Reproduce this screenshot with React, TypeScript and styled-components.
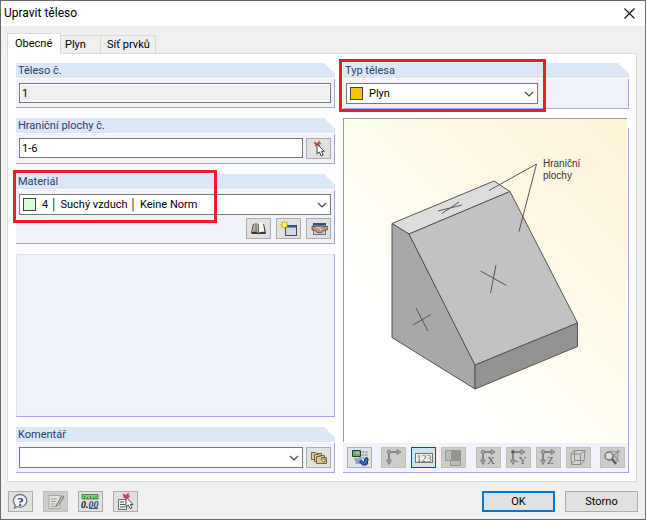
import React from "react";
import styled, { createGlobalStyle, css } from "styled-components";

const GlobalStyle = createGlobalStyle`
  * { box-sizing: border-box; }
  body {
    margin: 0;
    font-family: Roboto, "Liberation Sans", sans-serif;
    font-size: 11px;
    line-height: 15px;
    color: #000;
  }
  button, input, select { font: inherit; color: inherit; margin: 0; }
`;

const Dialog = styled.main`
  min-height: 100vh;
  display: flex;
  flex-direction: column;
  background: #f0f0f0;
  border: 1px solid #6b696b;
`;

const TitleBar = styled.header`
  height: 25px;
  display: flex;
  align-items: center;
  justify-content: space-between;
  padding: 0 10px 0 3px;
  background: #fff;
`;

const Title = styled.h1`
  margin: 0;
  font-size: 12px;
  font-weight: 400;
`;

const CloseButton = styled.button`
  display: flex;
  padding: 0;
  border: 0;
  background: none;
`;

const TabList = styled.div`
  display: flex;
  align-items: flex-end;
  height: 27px;
  padding-left: 6px;
`;

const Tab = styled.button<{ $active?: boolean }>`
  height: 18px;
  min-width: 40px;
  padding: 0 4px;
  text-align: left;
  border: 1px solid #d9d9d9;
  border-left-width: 0;
  border-bottom: 0;
  background: #f0f0f0;
  ${(p) =>
    p.$active &&
    css`
      height: 21px;
      min-width: 54px;
      margin-bottom: -1px;
      padding: 0 7px 2px 7px;
      border-left-width: 1px;
      background: #fff;
      position: relative;
    `}
`;

const WideTab = styled(Tab)`
  min-width: 55px;
  padding: 0 4px 0 6px;
`;

const Panel = styled.section`
  flex: 1;
  display: grid;
  grid-template-columns: 319fr 286fr;
  gap: 8px;
  margin: 0 8px 0 6px;
  padding: 9px 7px 8px 8px;
  background: #fff;
  border: 1px solid #dcdcdc;
`;

const Column = styled.div<{ $gap: number }>`
  display: flex;
  flex-direction: column;
  gap: ${(p) => p.$gap}px;
  min-width: 0;
`;

const Group = styled.section`
  border: solid #a5a5ef;
  border-width: 0 1px 1px 0;
  background: #f0f3f9;
  clip-path: polygon(0 0, calc(100% - 11px) 0, 100% 11px, 100% 100%, 0 100%);
`;

const GroupTitle = styled.h2`
  margin: 0 -1px 0 0;
  height: 16px;
  padding-left: 2px;
  font-size: 11px;
  line-height: 16px;
  font-weight: 400;
  color: #1f4272;
  background: #dce6f4;
  border-bottom: 1px solid #fff;
`;

const GroupBody = styled.div`
  display: flex;
  flex-direction: column;
  gap: 3px;
  padding: 4px 3px;
`;

const EmptyGroup = styled.section`
  flex: 1;
  background: #f0f3f9;
  border: 1px solid #a5a5ef;
  border-top-color: #dce6f4;
  border-left-color: #dce6f4;
`;

const Row = styled.div<{ $end?: boolean; $gap?: number }>`
  display: flex;
  justify-content: ${(p) => (p.$end ? "flex-end" : "flex-start")};
  gap: ${(p) => p.$gap ?? 3}px;
`;

const TextInput = styled.input`
  flex: 1;
  min-width: 0;
  height: 20px;
  padding: 0 2px;
  border: 1px solid #7a7a7a;
  border-radius: 0;
  outline: 0;
  background: #fff;
  &:read-only { background: #f0f0f0; box-shadow: inset 0 0 0 1px #fff; }
`;

const ComboFrame = styled.div<{ $partial?: boolean }>`
  flex: ${(p) => (p.$partial ? "0 1 192px" : "1")};
  min-width: 0;
  height: 21px;
  display: flex;
  align-items: center;
  padding: 0 3px;
  background: #fff;
  border: 1px solid #7a7a7a;
`;

const ComboSelect = styled.select`
  flex: 1;
  min-width: 0;
  height: 19px;
  padding: 0;
  appearance: none;
  border: 0;
  outline: 0;
  background: transparent;
`;

const Swatch = styled.span<{ $color: string }>`
  width: 13px;
  height: 13px;
  margin-right: 6px;
  border: 1px solid #444;
  background: ${(p) => p.$color};
`;

const IconButton = styled.button<{ $active?: boolean }>`
  flex: none;
  width: 25px;
  height: 21px;
  display: flex;
  align-items: center;
  justify-content: center;
  padding: 0;
  background: #e1e1e1;
  border: 1px solid #adadad;
  &:disabled { background: #ccc; border-color: #bfbfbf; }
  ${(p) => p.$active && css`background: #cce4f7; border-color: #00549a;`}
`;

const ViewGroup = styled.section`
  position: relative;
  flex: 1;
  display: flex;
  flex-direction: column;
  background: #fff;
  border-bottom: 1px solid #a5a5ef;
  &::after {
    content: "";
    position: absolute;
    top: 10px;
    right: 0;
    bottom: 0;
    width: 1px;
    background: #a5a5ef;
  }
`;

const Preview = styled.figure`
  flex: 1;
  margin: 0 2px 1px 0;
  display: flex;
  border: solid #9b9b9b;
  border-width: 1px 0 0 1px;
  background: linear-gradient(45deg, #fff 25%, #fffcef 52%, #fef7e2 72%, #fcf4d8 100%);
  svg { width: 100%; height: 100%; }
`;

const ViewTools = styled.div`
  display: flex;
  justify-content: space-between;
  padding: 4px;
  background: #f0f3f9;
`;

const ToolSet = styled.div`
  display: flex;
  gap: 5px;
`;

const Footer = styled.footer`
  display: flex;
  align-items: center;
  gap: 10px;
  height: 37px;
  padding: 2px 7px 0;
`;

const Spacer = styled.span`
  flex: 1;
`;

const PushButton = styled.button<{ $primary?: boolean }>`
  width: 73px;
  height: 21px;
  padding: 0;
  line-height: 17px;
  background: #e1e1e1;
  border: ${(p) => (p.$primary ? "2px solid #0078d7" : "1px solid #adadad")};
`;

const MarkedArea = styled.div`
  position: relative;
`;

const Mark = styled.span<{ $width: number; $left: number }>`
  position: absolute;
  z-index: 1;
  top: -4px;
  left: ${(p) => p.$left}px;
  width: ${(p) => p.$width}px;
  height: 53px;
  border: 3px solid #ee1c25;
  pointer-events: none;
`;

const Chevron = () => (
  <svg width="10" height="6" viewBox="0 0 10 6" fill="none" stroke="#444" strokeWidth="1.1">
    <path d="M1 1l4 4 4-4" />
  </svg>
);

const PickIcon = () => (
  <svg width="18" height="18" viewBox="0 0 18 18">
    <path d="M4 2l6 4M10 1L5 6M4 3.500h7" stroke="#d84a4a" strokeWidth="1.500" fill="none" />
    <path d="M7 4v10l2.400-2 1.800 4 2-1-1.800-3.700h3z" fill="#fff" stroke="#444" />
  </svg>
);

const BookIcon = () => (
  <svg width="17" height="15" viewBox="0 0 17 15">
    <path d="M1 12L3 3h11l2 9-1 1H2z" fill="#35373f" />
    <path d="M2 11L4 2c2-.7 3.500-.3 4.500 1v9c-2-1.300-4-1.500-6.500-1z" fill="#b9b2a3" />
    <path d="M8.500 12V3C9.500 1.500 11 1.200 13 2l1.500 9c-2-.5-4-.3-6 1z" fill="#f7f5ef" />
    <path d="M8.500 3v9M6 2.500v8.500" stroke="#6a655c" fill="none" />
  </svg>
);

const NewIcon = () => (
  <svg width="18" height="17" viewBox="0 0 18 17">
    <rect x="5.500" y="5.500" width="11" height="10" fill="#d3d8de" stroke="#4c4c4c" />
    <path d="M6 5h10v2.500H6z" fill="#2b50a8" />
    <path d="M4.500 1v8M.5 5h8M1.500 2l6 6M7.500 2l-6 6" stroke="#c9b400" strokeWidth="1.300" />
    <circle cx="4.500" cy="5" r="2.200" fill="#fff45c" />
  </svg>
);

const EditIcon = () => (
  <svg width="18" height="16" viewBox="0 0 18 16">
    <rect x="3.500" y="2.500" width="12" height="11" fill="#cfcfcf" stroke="#777" />
    <path d="M3 2h13v2.500H3z" fill="#2b4f9c" />
    <path d="M2 5l5 .5 3-1 4 1h4v3l-4 1-3 2.500-4-.5-2-2-3-.5z" fill="#b99a80" stroke="#57483e" strokeWidth=".8" />
    <path d="M6 6.500l3 .5 3 2" stroke="#f1d9c4" fill="none" />
  </svg>
);

const FoldersIcon = () => (
  <svg width="18" height="14" viewBox="0 0 18 14" fill="#d8ca91" stroke="#72683f">
    <path d="M1.500 8.500v-7h4l1 1h5v6z" />
    <path d="M4.500 10.500v-7h4l1 1h5v6z" />
    <path d="M6.500 12.500v-7h4l1 1h5v6z" />
    <path d="M11 8h4v3h-2z" fill="#fff" />
  </svg>
);

const DisplayIcon = () => (
  <svg width="18" height="18" viewBox="0 0 18 18">
    <path d="M8 2h9v8H8z" fill="#9da9ac" />
    <path d="M11 2v8M13.500 2v8M16 2v8M9 4.500h8M9 7.500h8" stroke="#e6eaec" strokeWidth=".7" />
    <path d="M1.500 1.500h8v6h-8z" fill="#58b83d" stroke="#263b46" />
    <path d="M2 2h7v2H2z" fill="#54a9dc" />
    <path d="M5 3h3v2H5z" fill="#f2b928" />
    <path d="M3 9h8v6H5z" fill="#8fa3c2" />
    <path d="M8.500 12.500l2-1 2 1.500 1-1v-2l2-1.500 1.500 1v2l-1 1.500 1 1-1.500 2h-4z" fill="#2f68b5" stroke="#183564" />
  </svg>
);

const AxisIcon = ({ axis }: { axis?: string }) => (
  <svg width="18" height="17" viewBox="0 0 18 17" fill="none" stroke="#858580">
    <path d="M4 3h11M4 3v12" strokeWidth="2" />
    <path d="M12 .5l4 2.500-4 2.500zM1.500 11L4 15.500 6.500 11z" fill="#a5a5a0" />
    <circle cx="4" cy="3" r="1.800" fill={axis === "-Y" ? "#555" : "#a5a5a0"} />
    {axis && (
      <text x={axis === "-Y" ? 6 : 8} y="15" fill="#666" stroke="none" fontFamily="Liberation Serif, serif" fontSize="11">{axis}</text>
    )}
  </svg>
);

const NumbersIcon = () => (
  <svg width="18" height="12" viewBox="0 0 18 12">
    <rect x=".5" y="1.500" width="17" height="9" fill="#f3f1ea" stroke="#77746d" />
    <text x="9" y="9.500" textAnchor="middle" fill="#6a6760" fontFamily="Liberation Serif, serif" fontSize="10">123</text>
  </svg>
);

const LayersIcon = () => (
  <svg width="17" height="17" viewBox="0 0 17 17">
    <path d="M.5 1.500h6v10h-6zM5.500 11.500h10v5h-10z" fill="#bcbcb8" stroke="#969690" />
    <path d="M6 1h10v10H6z" fill="#969690" />
  </svg>
);

const CubeIcon = () => (
  <svg width="18" height="17" viewBox="0 0 18 17" fill="#d2d2ce" stroke="#8c8c88">
    <path d="M2 4.500l3.500-3h10.500l-1 10.500-3 3.500H2.500z" />
    <path d="M2 5h9.500l4.500-3.500M11.500 5v10M5.500 2v9.500H15M5.500 11.500L2.500 15" fill="none" />
  </svg>
);

const SearchOffIcon = () => (
  <svg width="18" height="17" viewBox="0 0 18 17" fill="none" stroke="#777772">
    <path d="M7 3l9 9M16 1L6 12M8 2l9 1M15 1l-1 12" stroke="#96968f" strokeWidth="1.200" />
    <circle cx="6" cy="7" r="4" fill="#dcdcd8" strokeWidth="1.500" />
    <path d="M9 10l4 5" stroke="#5e5e5a" strokeWidth="2.500" />
  </svg>
);

const HelpIcon = () => (
  <svg width="17" height="17" viewBox="0 0 17 17">
    <path d="M8.500 1.500a6.500 6.300 0 1 1-3 12L2.500 15l.7-3A6.500 6.300 0 0 1 8.500 1.500z" fill="#f4f5f8" stroke="#73777e" strokeWidth="1.300" />
    <text x="8.500" y="12.500" textAnchor="middle" fill="#233f86" fontWeight="700" fontFamily="Liberation Serif, serif" fontSize="13">?</text>
  </svg>
);

const NoteIcon = () => (
  <svg width="18" height="18" viewBox="0 0 18 18">
    <path d="M2 2.500h11v13H2z" fill="#e2e2da" stroke="#a6a69e" />
    <path d="M4 6h6M4 8.500h5M4 11h4M4 13.500h5" stroke="#9f9f97" />
    <path d="M15.500 2.500l1.500 1.500-6 8.500-2 1 .5-2z" fill="#c4c4bc" stroke="#77776f" />
  </svg>
);

const UnitsIcon = () => (
  <svg width="19" height="17" viewBox="0 0 19 17">
    <path d="M1 1.500h16v4.500H1z" fill="#79cf74" stroke="#4b9048" />
    <path d="M3.500 3v3M6.500 4v2M9.500 3v3M12.500 4v2M15 3v3" stroke="#35733a" strokeWidth=".8" />
    <path d="M8 15.500h9" stroke="#2f4f9c" />
    <text x="0" y="14.500" fill="#111" fontFamily="Liberation Serif, serif" fontSize="10" fontStyle="italic" fontWeight="700">
      0.<tspan fill="#2a4284">00</tspan>
    </text>
  </svg>
);

const PickListIcon = () => (
  <svg width="18" height="18" viewBox="0 0 18 18">
    <path d="M1.500 6.500h8v10h-8z" fill="#f2f2f2" stroke="#666" />
    <path d="M3 9h4M3 11.500h5M3 14h5" stroke="#555" />
    <path d="M6 1l6 4M12 0L7 5M6 3h7" stroke="#dd4040" strokeWidth="1.500" />
    <path d="M9 4v10l2.300-2 1.700 3.700 2-1-1.700-3.200H16z" fill="#fff" stroke="#444" />
  </svg>
);

const SolidDrawing = () => (
  <svg viewBox="344 119 283 323" role="img" aria-label="Hraniční plochy" stroke="#555" strokeWidth="1" strokeLinejoin="round">
    <path d="M392 223.500L494 181l16 10.500L409 234z" fill="#dedddc" />
    <path d="M392 223.500L409 234l66 131v24l-83-51.500z" fill="#a8a8a8" />
    <path d="M409 234l101-42.500L577.500 323 475 365z" fill="#c2c2c2" />
    <path d="M475 365l102.500-42v23.500L475 389z" fill="#949392" />
    <path
      d="M489 190.500l47.500-26.500L519 231.500M438 211l24-6M442 213.500l17-11.500M480.500 271l26 14.500M496 265l-5.500 28M413 325l18-10.500M416 308l12 23"
      fill="none"
    />
    <g fill="#333" stroke="none" fontFamily="Liberation Sans, sans-serif" fontSize="10">
      <text x="543" y="167">Hraniční</text>
      <text x="543" y="179">plochy</text>
    </g>
  </svg>
);

const viewAxes = ["X", "-Y", "Z"];

const material = ["4", "Suchý vzduch", "Keine Norm"].join("\u00a0\u2502\u00a0");

export default function App() {
  return (
    <>
      <GlobalStyle />
      <Dialog>
        <TitleBar>
          <Title>Upravit těleso</Title>
          <CloseButton aria-label="Zavřít">
            <svg width="11" height="11" viewBox="0 0 11 11" stroke="#111" strokeWidth="1.100">
              <path d="M.5.5l10 10M10.500.5l-10 10" />
            </svg>
          </CloseButton>
        </TitleBar>
        <TabList role="tablist">
          <Tab $active role="tab" aria-selected="true">Obecné</Tab>
          <Tab role="tab" aria-selected="false">Plyn</Tab>
          <WideTab role="tab" aria-selected="false">Síť prvků</WideTab>
        </TabList>
        <Panel role="tabpanel">
          <Column $gap={10}>
            <Group>
              <GroupTitle><label htmlFor="solid">Těleso č.</label></GroupTitle>
              <GroupBody>
                <Row><TextInput id="solid" defaultValue="1" readOnly /></Row>
              </GroupBody>
            </Group>
            <Group>
              <GroupTitle><label htmlFor="surfaces">Hraniční plochy č.</label></GroupTitle>
              <GroupBody>
                <Row>
                  <TextInput id="surfaces" defaultValue="1-6" />
                  <IconButton aria-label="Vybrat plochy"><PickIcon /></IconButton>
                </Row>
              </GroupBody>
            </Group>
            <MarkedArea>
              <Group>
                <GroupTitle><label htmlFor="material">Materiál</label></GroupTitle>
                <GroupBody>
                  <Row>
                    <ComboFrame>
                      <Swatch $color="#d9fcd9" />
                      <ComboSelect id="material"><option>{material}</option></ComboSelect>
                      <Chevron />
                    </ComboFrame>
                  </Row>
                  <Row $end $gap={5}>
                    <IconButton aria-label="Knihovna"><BookIcon /></IconButton>
                    <IconButton aria-label="Nový"><NewIcon /></IconButton>
                    <IconButton aria-label="Upravit"><EditIcon /></IconButton>
                  </Row>
                </GroupBody>
              </Group>
              <Mark $left={-3} $width={204} />
            </MarkedArea>
            <EmptyGroup />
            <Group>
              <GroupTitle><label htmlFor="comment">Komentář</label></GroupTitle>
              <GroupBody>
                <Row>
                  <ComboFrame>
                    <ComboSelect id="comment"><option></option></ComboSelect>
                    <Chevron />
                  </ComboFrame>
                  <IconButton aria-label="Uložené komentáře"><FoldersIcon /></IconButton>
                </Row>
              </GroupBody>
            </Group>
          </Column>
          <Column $gap={9}>
            <MarkedArea>
              <Group>
                <GroupTitle><label htmlFor="type">Typ tělesa</label></GroupTitle>
                <GroupBody>
                  <Row>
                    <ComboFrame $partial>
                      <Swatch $color="#f7c600" />
                      <ComboSelect id="type"><option>Plyn</option></ComboSelect>
                      <Chevron />
                    </ComboFrame>
                  </Row>
                </GroupBody>
              </Group>
              <Mark $left={-4} $width={207} />
            </MarkedArea>
            <ViewGroup>
              <Preview><SolidDrawing /></Preview>
              <ViewTools>
                <IconButton aria-label="Zobrazení"><DisplayIcon /></IconButton>
                <ToolSet>
                  <IconButton disabled aria-label="Osy"><AxisIcon /></IconButton>
                  <IconButton $active aria-label="Číslování"><NumbersIcon /></IconButton>
                  <IconButton disabled aria-label="Vrstvy"><LayersIcon /></IconButton>
                </ToolSet>
                <ToolSet>
                  {viewAxes.map((axis) => (
                    <IconButton key={axis} disabled aria-label={`Pohled ${axis}`}><AxisIcon axis={axis} /></IconButton>
                  ))}
                  <IconButton disabled aria-label="Izometrie"><CubeIcon /></IconButton>
                </ToolSet>
                <IconButton disabled aria-label="Zobrazit vše"><SearchOffIcon /></IconButton>
              </ViewTools>
            </ViewGroup>
          </Column>
        </Panel>
        <Footer>
          <IconButton aria-label="Nápověda"><HelpIcon /></IconButton>
          <IconButton disabled aria-label="Poznámka"><NoteIcon /></IconButton>
          <IconButton aria-label="Jednotky"><UnitsIcon /></IconButton>
          <IconButton aria-label="Převzít"><PickListIcon /></IconButton>
          <Spacer />
          <PushButton $primary>OK</PushButton>
          <PushButton>Storno</PushButton>
        </Footer>
      </Dialog>
    </>
  );
}
